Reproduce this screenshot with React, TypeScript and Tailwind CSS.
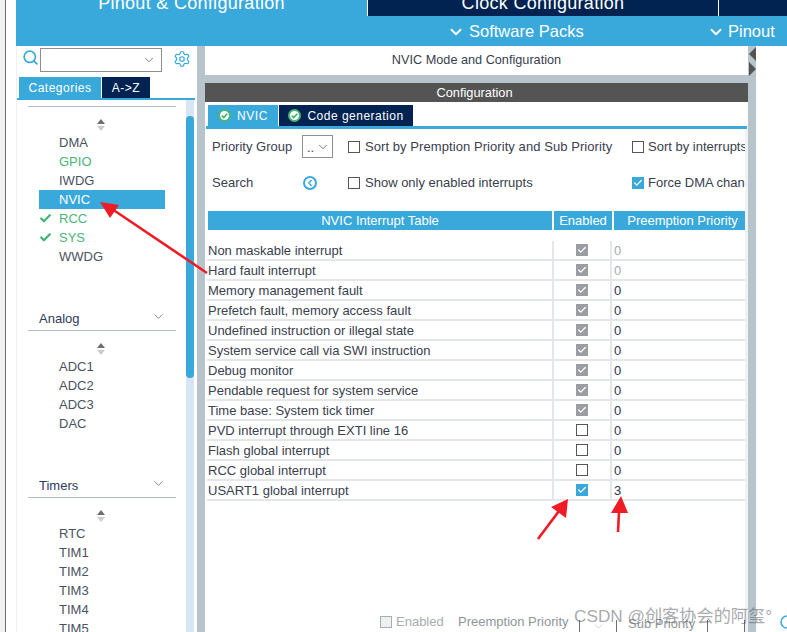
import { Check, ChevronDown, ChevronLeft, Search, Settings } from "lucide-react";

const FONT = "font-['Liberation_Sans',Arial,sans-serif]";

type Peripheral = { name: string; state?: "green" | "checked" | "selected" };

const systemCore: Peripheral[] = [
  { name: "DMA" },
  { name: "GPIO", state: "green" },
  { name: "IWDG" },
  { name: "NVIC", state: "selected" },
  { name: "RCC", state: "checked" },
  { name: "SYS", state: "checked" },
  { name: "WWDG" },
];
const analog: Peripheral[] = [{ name: "ADC1" }, { name: "ADC2" }, { name: "ADC3" }, { name: "DAC" }];
const timers: Peripheral[] = [
  { name: "RTC" },
  { name: "TIM1" },
  { name: "TIM2" },
  { name: "TIM3" },
  { name: "TIM4" },
  { name: "TIM5" },
];

type Interrupt = { name: string; box: "locked" | "off" | "on"; value: string; dim?: boolean };

const interrupts: Interrupt[] = [
  { name: "Non maskable interrupt", box: "locked", value: "0", dim: true },
  { name: "Hard fault interrupt", box: "locked", value: "0", dim: true },
  { name: "Memory management fault", box: "locked", value: "0" },
  { name: "Prefetch fault, memory access fault", box: "locked", value: "0" },
  { name: "Undefined instruction or illegal state", box: "locked", value: "0" },
  { name: "System service call via SWI instruction", box: "locked", value: "0" },
  { name: "Debug monitor", box: "locked", value: "0" },
  { name: "Pendable request for system service", box: "locked", value: "0" },
  { name: "Time base: System tick timer", box: "locked", value: "0" },
  { name: "PVD interrupt through EXTI line 16", box: "off", value: "0" },
  { name: "Flash global interrupt", box: "off", value: "0" },
  { name: "RCC global interrupt", box: "off", value: "0" },
  { name: "USART1 global interrupt", box: "on", value: "3" },
];

function SortArrows() {
  return (
    <div className="flex h-[26px] items-start justify-center pt-[12px]">
      <svg width="10" height="12" viewBox="0 0 10 12">
        <path d="M5 0 L9 5 H1 Z" fill="#6b6f73" />
        <path d="M5 12 L9 7 H1 Z" fill="#c9cdd1" />
      </svg>
    </div>
  );
}

function PeripheralList({ items }: { items: Peripheral[] }) {
  return (
    <div className="flex flex-col">
      {items.map((item) => (
        <div key={item.name} className="relative flex h-[19px] items-center pl-[23px] text-[13px]">
          {item.state === "selected" ? (
            <div className="flex h-[19px] w-[126px] items-center bg-[#39a9dc] pl-[20px] text-white">{item.name}</div>
          ) : (
            <span className={item.state ? "pl-[20px] text-[#4cb577]" : "pl-[20px] text-[#4a5260]"}>{item.name}</span>
          )}
          {item.state === "checked" ? (
            <Check className="absolute left-[23px] top-[3px] h-[13px] w-[13px] text-[#3cb371]" strokeWidth={4} />
          ) : null}
        </div>
      ))}
    </div>
  );
}

function CategoryHeader({ label }: { label: string }) {
  return (
    <div className="ml-[12px] mt-[37px] flex h-[28px] w-[148px] items-end justify-between border-b border-[#b4bcc4] pb-[2px] pl-[11px]">
      <span className="text-[13px] text-[#2c3a5c]">{label}</span>
      <ChevronDown className="mb-[4px] mr-[10px] h-[15px] w-[15px] text-[#7b8288]" strokeWidth={1.5} />
    </div>
  );
}

function StatusDot() {
  return (
    <svg width="13" height="13" viewBox="0 0 13 13">
      <circle cx="6.5" cy="6.5" r="5.5" fill="#ffffff" stroke="#4cb577" strokeWidth="2" />
      <path d="M3.8 6.6 L5.8 8.6 L9.3 4.7" fill="none" stroke="#3cb371" strokeWidth="1.7" />
    </svg>
  );
}

function Box({ state }: { state: "locked" | "off" | "on" }) {
  if (state === "off") {
    return <div className="h-[12px] w-[12px] border border-[#555] bg-white" />;
  }
  return (
    <div className={state === "on" ? "flex h-[12px] w-[12px] items-center justify-center bg-[#39a9dc]" : "flex h-[12px] w-[12px] items-center justify-center bg-[#9a9ea3]"}>
      <Check className="h-[10px] w-[10px] text-white" strokeWidth={3} />
    </div>
  );
}

export default function App() {
  return (
    <div className={`${FONT} relative flex h-[632px] w-[787px] overflow-hidden bg-white`}>
      <div className="h-full w-[6px] border-r border-[#6e6e6e] bg-[#f0f0f0]" />
      <div className="ml-[10px] flex min-w-0 flex-1 flex-col">
        {/* top tabs, cut off by the crop */}
        <div className="flex h-[16px] overflow-hidden text-[18px] leading-[16px] text-white">
          <div className="flex w-[351px] items-end justify-center bg-[#39a9dc]">
            <span className="mb-[5px] tracking-[0.3px]">Pinout &amp; Configuration</span>
          </div>
          <div className="ml-px flex w-[350px] items-end justify-center bg-[#002352]">
            <span className="mb-[5px] tracking-[0.3px]">Clock Configuration</span>
          </div>
          <div className="ml-px flex-1 bg-[#002352]" />
        </div>
        <div className="flex h-[30px] items-center bg-[#39a9dc] pt-[1px] text-[16.5px] text-white">
          <ChevronDown className="ml-[431px] h-[18px] w-[18px] shrink-0" strokeWidth={2.5} />
          <span className="ml-[4px] w-[114px] shrink-0 whitespace-nowrap">Software Packs</span>
          <ChevronDown className="ml-[124px] h-[18px] w-[18px] shrink-0" strokeWidth={2.5} />
          <span className="ml-[3px] whitespace-nowrap">Pinout</span>
        </div>

        <div className="flex min-h-0 flex-1">
          {/* left panel */}
          <div className="flex w-[181px] flex-col overflow-hidden shadow-[inset_1px_0_0_#f0f0f0]">
            <div className="flex h-[31px] items-start pl-[6px] pt-[2px]">
              <Search className="mt-[1px] h-[17px] w-[17px] text-[#39a9dc]" strokeWidth={2.4} />
              <div className="ml-px flex h-[24px] w-[122px] items-center justify-end border border-[#8e8e8e] pr-[5px]">
                <ChevronDown className="h-[14px] w-[14px] text-[#707070]" strokeWidth={1.6} />
              </div>
              <Settings className="ml-[11px] mt-[2px] h-[18px] w-[18px] text-[#39a9dc]" strokeWidth={1.6} />
            </div>
            <div className="flex h-[21px] pl-[3px] text-[12px] tracking-[0.5px] text-white">
              <div className="flex w-[82px] items-center justify-center bg-[#39a9dc]">Categories</div>
              <div className="ml-px flex w-[48px] items-center justify-center bg-[#002352]">A-&gt;Z</div>
            </div>
            <div className="ml-px h-[2px] w-[178px] bg-[#39a9dc]" />
            <div className="flex min-h-0 flex-1">
              <div className="w-[170px] overflow-hidden">
                <div className="ml-[12px] mt-[6px] h-px w-[148px] bg-[#b4bcc4]" />
                <SortArrows />
                <PeripheralList items={systemCore} />
                <CategoryHeader label="Analog" />
                <SortArrows />
                <PeripheralList items={analog} />
                <CategoryHeader label="Timers" />
                <SortArrows />
                <PeripheralList items={timers} />
              </div>
              <div className="h-full w-[8px] bg-[#d6e6f3] pt-[16px]">
                <div className="h-[262px] rounded-full bg-[#39a9dc]" />
              </div>
            </div>
          </div>

          <div className="w-[8px] bg-[#b8c4cc]" />

          {/* right panel */}
          <div className="flex w-[543px] flex-col overflow-hidden text-[13px] text-[#39404e]">
            <div className="flex h-[29px] items-center justify-center pt-px text-[12.7px]">NVIC Mode and Configuration</div>
            <div className="h-[8px] bg-[#b8c4cc]" />
            <div className="flex h-[19px] items-center justify-center bg-[#545454] pr-[4px] pt-px text-[12.8px] text-white">Configuration</div>
            <div className="mt-[3px] flex h-[21px] pl-[3px] text-[12px] text-white">
              <div className="flex w-[70px] items-center justify-center gap-[6px] bg-[#39a9dc] tracking-[0.6px]">
                <StatusDot />
                NVIC
              </div>
              <div className="ml-px flex w-[134px] items-center justify-center gap-[6px] bg-[#002352] tracking-[0.5px]">
                <StatusDot />
                Code generation
              </div>
            </div>
            <div className="ml-px mr-px h-[3px] bg-[#39a9dc]" />

            <div className="flex min-h-0 flex-1">
              <div className="w-[540px] overflow-hidden">
                <div className="flex h-[35px] items-center whitespace-nowrap">
                  <span className="ml-[7px] w-[90px] shrink-0">Priority Group</span>
                  <div className="flex h-[23px] w-[31px] shrink-0 items-center justify-between border border-[#8e8e8e] pl-[4px] pr-[2px]">
                    <span className="mt-[2px]">..</span>
                    <ChevronDown className="h-[14px] w-[14px] text-[#707070]" strokeWidth={1.6} />
                  </div>
                  <div className="ml-[15px] h-[12px] w-[12px] shrink-0 border border-[#555]" />
                  <span className="ml-[5px] w-[267px] shrink-0 tracking-[0.07px]">Sort by Premption Priority and Sub Priority</span>
                  <div className="h-[12px] w-[12px] shrink-0 border border-[#555]" />
                  <span className="ml-[4px]">Sort by interrupts</span>
                </div>
                <div className="flex h-[38px] items-center whitespace-nowrap">
                  <span className="ml-[7px] w-[91px] shrink-0">Search</span>
                  <div className="flex h-[14px] w-[14px] shrink-0 items-center justify-center rounded-full border-2 border-[#39a9dc]">
                    <ChevronLeft className="h-[10px] w-[10px] text-[#39a9dc]" strokeWidth={3.5} />
                  </div>
                  <div className="ml-[31px] h-[12px] w-[12px] shrink-0 border border-[#555]" />
                  <span className="ml-[5px] w-[267px] shrink-0">Show only enabled interrupts</span>
                  <div className="flex h-[12px] w-[12px] shrink-0 items-center justify-center bg-[#39a9dc]">
                    <Check className="h-[10px] w-[10px] text-white" strokeWidth={3} />
                  </div>
                  <span className="ml-[4px]">Force DMA channel Interrupt</span>
                </div>

                <div className="ml-[3px] mt-[9px] flex h-[19px] w-[537px] text-white">
                  <div className="flex w-[344px] items-center justify-center bg-[#39a9dc] pt-px">NVIC Interrupt Table</div>
                  <div className="ml-[2px] flex w-[58px] items-center justify-center bg-[#39a9dc] pt-px">Enabled</div>
                  <div className="ml-[2px] flex w-[131px] items-center justify-center bg-[#39a9dc] pl-[6px] pt-px">Preemption Priority</div>
                </div>

                <div className="ml-[2px] mt-[11px] w-[538px]">
                  {interrupts.map((row) => (
                    <div key={row.name} className="flex h-[20px] items-center border-b-2 border-[#e4e7ea]">
                      <div className="w-[345px] pl-px pt-px">{row.name}</div>
                      <div className="flex h-full w-[60px] items-center justify-center border-x-2 border-[#e4e7ea]">
                        <Box state={row.box} />
                      </div>
                      <div className={row.dim ? "pl-[2px] pt-px text-[#9db0a8]" : "pl-[2px] pt-px text-[#2c3550]"}>{row.value}</div>
                    </div>
                  ))}
                </div>

                {/* details strip at the bottom */}
                <div className="ml-[175px] mt-[111px] flex h-[20px] items-center whitespace-nowrap text-[#8f959b]">
                  <div className="h-[12px] w-[12px] shrink-0 border border-[#a9aeb3] bg-[#eef0f2]" />
                  <span className="ml-[4px] w-[62px] shrink-0 text-[#a7acb1]">Enabled</span>
                  <span className="w-[121px] shrink-0">Preemption Priority</span>
                  <div className="mt-[9px] flex h-[14px] w-[38px] shrink-0 items-center justify-center border-x border-[#6e6e6e]">
                    <ChevronDown className="h-[13px] w-[13px] text-[#c9cdd1]" strokeWidth={1.6} />
                  </div>
                  <span className="ml-[11px] w-[79px] shrink-0 pt-[4px]">Sub Priority</span>
                  <div className="mt-[9px] h-[14px] w-[38px] shrink-0 border-x border-[#6e6e6e]" />
                </div>
              </div>
              <div className="w-[3px] bg-[#f0f2f4]" />
            </div>
          </div>

          {/* splitter with collapse handles */}
          <div className="flex w-[8px] flex-col bg-[#b8c4cc]">
            <svg width="8" height="30" viewBox="0 0 8 30">
              <path d="M8 1 L1 8 L8 15 Z" fill="#545454" />
              <path d="M1 16 L8 23 L1 30 Z" fill="#545454" />
            </svg>
          </div>
        </div>
      </div>

      {/* annotations painted over the screenshot */}
      <svg className="pointer-events-none absolute left-0 top-0" width="787" height="632" viewBox="0 0 787 632">
        <g fill="#ee1c25" stroke="none">
          <path d="M100 202 L119 205 L110 218 Z" />
          <path d="M568 499 L551 507 L566 518 Z" />
          <path d="M621 496 L611 513 L628 513 Z" />
        </g>
        <g stroke="#ee1c25" strokeWidth="2.6" fill="none">
          <path d="M207 273 L112 209" />
          <path d="M538 539 L559 511" />
          <path d="M618 532 L619 512" />
        </g>
        <circle cx="787" cy="622" r="6" fill="#ffffff" stroke="#39a9dc" strokeWidth="1.5" />
      </svg>
      <div className="pointer-events-none absolute left-[574px] top-[604px] whitespace-nowrap font-['Liberation_Sans','Noto_Sans_CJK_SC',sans-serif] text-[17.2px] text-[#55595e] opacity-50">
        CSDN @创客协会的阿玺°
      </div>
    </div>
  );
}
